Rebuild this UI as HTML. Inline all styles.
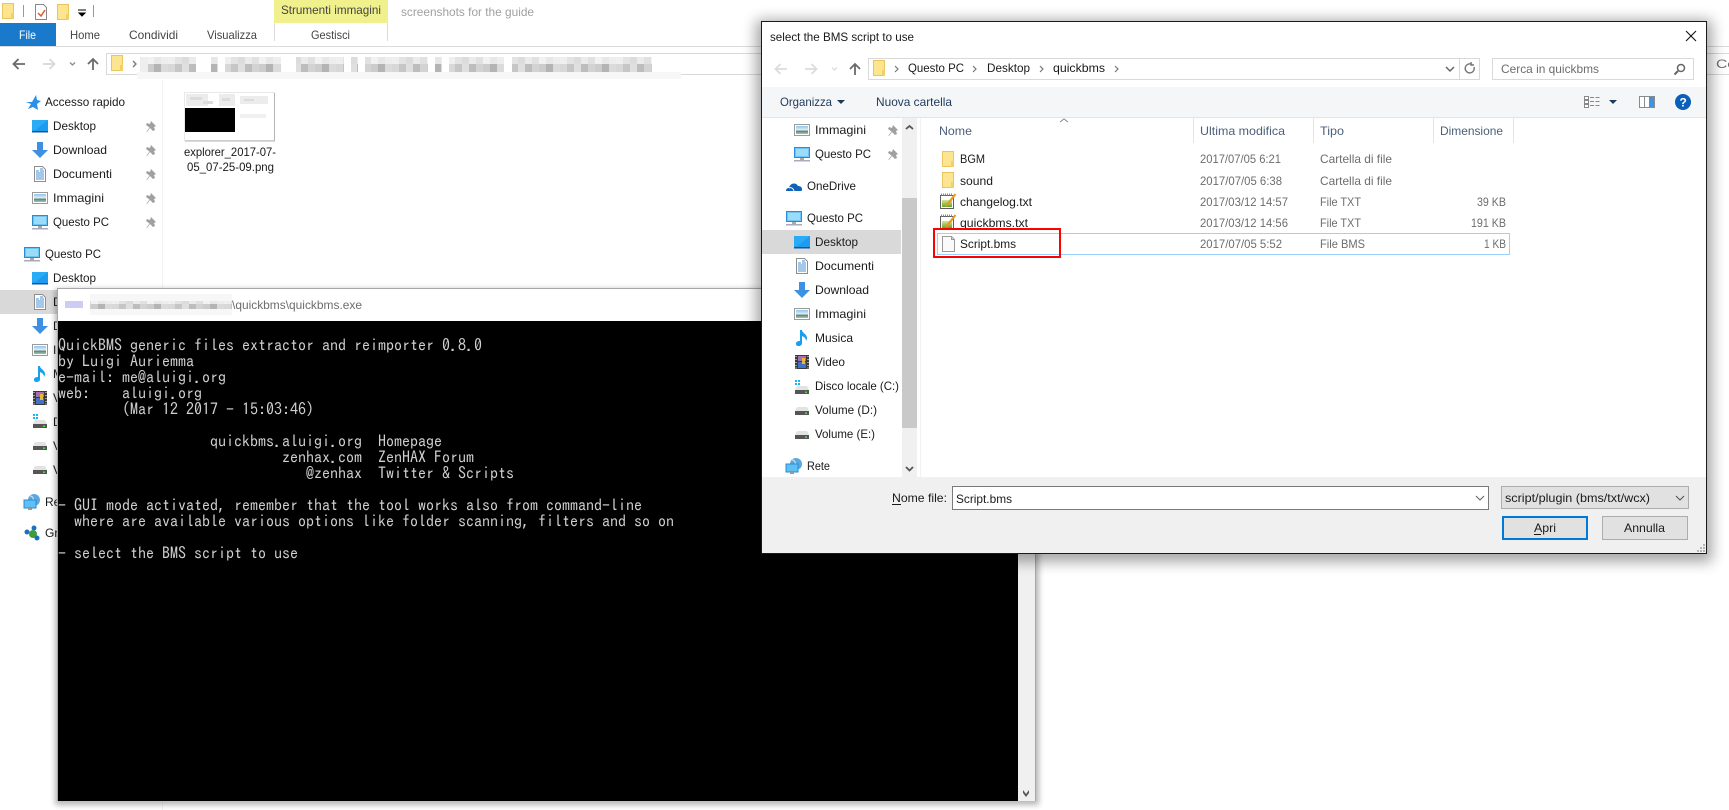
<!DOCTYPE html>
<html><head><meta charset="utf-8"><title>QuickBMS</title>
<style>
html,body{margin:0;padding:0;background:#fff;width:1729px;height:810px;overflow:hidden}
svg{display:block}
text{font-family:"Liberation Sans",sans-serif;font-size:12px;fill:#1a1a1a;white-space:pre}
.g{fill:#6d6d6d}
.h{fill:#4c607a}
.t{fill:#1e395b}
.r{fill:#444}
.c{font-family:"IPAGothic","Liberation Mono",monospace;font-size:16px;fill:#cfcfcf}
</style></head><body>
<svg xmlns="http://www.w3.org/2000/svg" width="1729" height="810" viewBox="0 0 1729 810">
<defs>
<filter id="sh" x="-10%" y="-10%" width="120%" height="120%"><feGaussianBlur stdDeviation="7"/></filter>
<filter id="sh2" x="-10%" y="-10%" width="120%" height="120%"><feGaussianBlur stdDeviation="3"/></filter>
<linearGradient id="sky" x1="0" y1="0" x2="0" y2="1"><stop offset="0" stop-color="#8fc4ec"/><stop offset=".55" stop-color="#e8f3fa"/><stop offset=".6" stop-color="#4f7d6a"/><stop offset="1" stop-color="#a9c7b8"/></linearGradient>
<linearGradient id="grn" x1="0" y1="0" x2="0" y2="1"><stop offset="0" stop-color="#d5e88a"/><stop offset="1" stop-color="#5fa82c"/></linearGradient>
<pattern id="bl" width="56" height="16" patternUnits="userSpaceOnUse">
<rect width="56" height="16" fill="#e6e6e6"/>
<rect x="0" width="7" height="8" fill="#d8d8d8"/><rect x="7" width="7" height="8" fill="#c6c6c6"/><rect x="14" width="7" height="8" fill="#dfdfdf"/><rect x="21" width="7" height="8" fill="#bdbdbd"/><rect x="28" width="7" height="8" fill="#d3d3d3"/><rect x="35" width="7" height="8" fill="#cccccc"/><rect x="42" width="7" height="8" fill="#b4b4b4"/><rect x="49" width="7" height="8" fill="#dbdbdb"/>
<rect x="0" y="8" width="7" height="8" fill="#efefef"/><rect x="7" y="8" width="7" height="8" fill="#e3e3e3"/><rect x="14" y="8" width="7" height="8" fill="#dcdcdc"/><rect x="21" y="8" width="7" height="8" fill="#ebebeb"/><rect x="28" y="8" width="7" height="8" fill="#e1e1e1"/><rect x="35" y="8" width="7" height="8" fill="#f2f2f2"/><rect x="42" y="8" width="7" height="8" fill="#e7e7e7"/><rect x="49" y="8" width="7" height="8" fill="#ededed"/>
</pattern>
<g id="folder"><path d="M.5.5h11v15H.5z" fill="#fde58f" stroke="#e8c55f"/><path d="M9 10h3v6H9z" fill="#f3cf68"/></g>
<g id="desk"><rect x="0" y="2" width="16" height="12" fill="#1c9bf0"/><path d="M0 2h16L3 12.500H0z" fill="#29abf6"/><rect x="0" y="13" width="16" height="1.500" fill="#14569c"/></g>
<g id="pc"><rect x=".5" y="1.500" width="15" height="10" fill="#6fc3f5" stroke="#2a8dd4"/><rect x="2" y="3" width="12" height="7" fill="#9bdcfa"/><rect x="6" y="12" width="4" height="2" fill="#aaa"/><rect x="0" y="14" width="16" height="1.500" fill="#aab"/></g>
<path id="dl" d="M5 0h6v8h5l-8 8-8-8h5z" fill="#3e90e2"/>
<g id="doc"><path d="M2.500.5h8l3 3v12h-11z" fill="#fff" stroke="#8e8e8e"/><path d="M4 5h3M4 7h8M4 9h8M4 11h8M4 13h8M8 3h3M8 5h4" stroke="#4a8fd6"/></g>
<g id="img"><rect x=".5" y="2.500" width="15" height="11" fill="#fff" stroke="#9a9a9a"/><rect x="2" y="4" width="12" height="8" fill="url(#sky)"/></g>
<path id="mus" d="M6 0h2c0 3 5 4 5 8 0 1-.5 2-1 3 0-3-2-4-4-5v7.500c0 1.500-1.500 2.500-3.500 2.500S2 15 2 13.500 3.500 11 6 11z" fill="#17a0f0"/>
<g id="vid"><rect x="1" y="1" width="14" height="14" fill="#3a3a3a"/><path d="M2 2v1M2 5v1M2 8v1M2 11v1M2 13.500v1M14 2v1M14 5v1M14 8v1M14 11v1M14 13.500v1" stroke="#fff"/><rect x="4" y="2" width="8" height="5" fill="#a86fb0"/><rect x="4" y="8" width="8" height="6" fill="#3f73c8"/><rect x="8" y="4" width="3" height="6" fill="#e8b83a"/></g>
<g id="disk"><path d="M3 3h10l2 4H1z" fill="#e3e3e3"/><rect x="1" y="7" width="14" height="4" fill="#555"/><rect x="11" y="8.500" width="2" height="1.500" fill="#3de03d"/></g>
<g id="diskc"><path d="M1 0h2v2H1zM4 0h2v2H4zM1 3h2v2H1zM4 3h2v2H4z" fill="#14b4f5"/><path d="M3 6h10l2 4H1z" fill="#e3e3e3"/><rect x="1" y="10" width="14" height="4" fill="#555"/><rect x="11" y="11.500" width="2" height="1.500" fill="#3de03d"/></g>
<path id="pin" d="M5 1l5 5-2 1 1 3-2 1-3-3-3 4-.5-.5 3-4L0 5l1-2 3 1z" fill="#a0a0a0"/>
<path id="star" d="M10 0l1 5 4 1-4 3 1 6-5-3-5 2 3-5-5-2h6z" fill="#2a90ea"/>
<g id="cloud"><path d="M0 13c0-2 1-3 3-3 1-5 7-6 9-2 2 0 4 1 4 3 0 1 0 2-1 2z" fill="#0f62b8"/><path d="M3 10c2-1 4 0 5 3" fill="none" stroke="#fff"/></g>
<g id="net"><circle cx="10" cy="6" r="6" fill="#5ba8e0"/><path d="M6 2c3 0 4 3 3 6" stroke="#cfe6f7" fill="none"/><rect x="0" y="6" width="12" height="8" fill="#5ec0f5" stroke="#2a8dd4"/><rect x="4" y="14" width="4" height="2" fill="#999"/></g>
<g id="home"><circle cx="3" cy="7" r="2.500" fill="#1d6fc4"/><circle cx="10" cy="3" r="2.500" fill="#1d6fc4"/><circle cx="9" cy="9" r="4" fill="#3f9b3c"/><circle cx="13" cy="13" r="2.500" fill="#1d6fc4"/></g>
<g id="txt"><rect x=".5" y="2.500" width="13" height="13" fill="#fff" stroke="#5e5e5e"/><path d="M1 1.500h12" stroke="#888" stroke-dasharray="1 1" stroke-width="2"/><rect x="2" y="7" width="10" height="7" fill="url(#grn)"/><path d="M6 13L15.500 1" stroke="#e89a1f" stroke-width="2.200"/></g>
<g id="file"><path d="M.5.500h9l3 3v12H.5z" fill="#fafafa" stroke="#9a9a9a"/><path d="M9.500.500v3h3" fill="none" stroke="#9a9a9a"/></g>
</defs>

<!-- Explorer background -->
<rect width="1729" height="810" fill="#fff"/>
<use href="#folder" x="2" y="3"/>
<path d="M23.500 5v12M93.500 5v12" stroke="#999"/>
<path d="M35.500 4.500h8l3 3v12h-11z" fill="#fff" stroke="#888"/>
<path d="M38 13l3 3 4-6" fill="none" stroke="#e8562a" stroke-width="1.500"/>
<use href="#folder" x="57" y="4"/>
<path d="M78 10h8M79 13h6l-3 3z" fill="#000" stroke="#000" stroke-width="1"/>
<rect x="0" y="23" width="56" height="23" fill="#1979ca"/>
<text x="19" y="39" textLength="17" lengthAdjust="spacingAndGlyphs" style="fill:#fff">File</text>
<text x="70" y="39" textLength="30" lengthAdjust="spacingAndGlyphs" class="r">Home</text>
<text x="129" y="39" textLength="49" lengthAdjust="spacingAndGlyphs" class="r">Condividi</text>
<text x="207" y="39" textLength="50" lengthAdjust="spacingAndGlyphs" class="r">Visualizza</text>
<rect x="274" y="0" width="114" height="23" fill="#f0f08c"/>
<text x="281" y="14" textLength="100" lengthAdjust="spacingAndGlyphs" class="r">Strumenti immagini</text>
<path d="M274.500 23v18M387.500 23v18" stroke="#dadbdc"/>
<text x="311" y="39" textLength="39" lengthAdjust="spacingAndGlyphs" class="r">Gestisci</text>
<text x="401" y="16" textLength="133" lengthAdjust="spacingAndGlyphs" style="fill:#a0a0a0">screenshots for the guide</text>
<path d="M0 46.500H1729" stroke="#dadbdc"/>
<!-- nav buttons -->
<path d="M25 64H14M18.500 59l-5 5 5 5" fill="none" stroke="#6a6a6a" stroke-width="1.800"/>
<path d="M43 64h11M49.500 59l5 5-5 5" fill="none" stroke="#d8d8d8" stroke-width="1.800"/>
<path d="M70 62.500l2.500 2.500 2.500-2.500" fill="none" stroke="#8a8a8a" stroke-width="1.300"/>
<path d="M93 70V59M88 64l5-5 5 5" fill="none" stroke="#6a6a6a" stroke-width="1.800"/>
<rect x="106.500" y="53.500" width="1640" height="21" fill="#fff" stroke="#d9d9d9"/>
<use href="#folder" x="111" y="55"/>
<path d="M133 61l3 3-3 3" fill="none" stroke="#777" stroke-width="1.300"/>
<rect x="137" y="72" width="544" height="7" fill="#f7f7f7"/>
<g fill="url(#bl)"><rect x="140" y="57" width="8" height="15" fill="#eee"/><rect x="148" y="57" width="48" height="15"/><rect x="211" y="57" width="7" height="15"/><rect x="225" y="57" width="56" height="15"/><rect x="296" y="57" width="48" height="15"/><rect x="351" y="57" width="7" height="15"/><rect x="365" y="57" width="63" height="15"/><rect x="435" y="57" width="7" height="15"/><rect x="449" y="57" width="55" height="15"/><rect x="512" y="57" width="140" height="15"/></g>
<text x="1716" y="68" textLength="20" lengthAdjust="spacingAndGlyphs" class="g">Ce</text>
<path d="M162.500 80V810" stroke="#f2f2f2"/>

<!-- explorer sidebar -->
<use href="#star" x="26" y="95"/>
<text x="45" y="106" textLength="80" lengthAdjust="spacingAndGlyphs">Accesso rapido</text>
<use href="#desk" x="32" y="118"/><text x="53" y="130" textLength="43" lengthAdjust="spacingAndGlyphs">Desktop</text><use href="#pin" x="146" y="120"/>
<use href="#dl" x="32" y="142"/><text x="53" y="154" textLength="54" lengthAdjust="spacingAndGlyphs">Download</text><use href="#pin" x="146" y="144"/>
<use href="#doc" x="32" y="166"/><text x="53" y="178" textLength="59" lengthAdjust="spacingAndGlyphs">Documenti</text><use href="#pin" x="146" y="168"/>
<use href="#img" x="32" y="190"/><text x="53" y="202" textLength="51" lengthAdjust="spacingAndGlyphs">Immagini</text><use href="#pin" x="146" y="192"/>
<use href="#pc" x="32" y="214"/><text x="53" y="226" textLength="56" lengthAdjust="spacingAndGlyphs">Questo PC</text><use href="#pin" x="146" y="216"/>
<use href="#pc" x="24" y="246"/><text x="45" y="258" textLength="56" lengthAdjust="spacingAndGlyphs">Questo PC</text>
<use href="#desk" x="32" y="270"/><text x="53" y="282" textLength="43" lengthAdjust="spacingAndGlyphs">Desktop</text>
<rect x="0" y="290" width="60" height="24" fill="#d9d9d9"/>
<use href="#doc" x="32" y="294"/><text x="53" y="306" textLength="59" lengthAdjust="spacingAndGlyphs">Documenti</text>
<use href="#dl" x="32" y="318"/><text x="53" y="330">Download</text>
<use href="#img" x="32" y="342"/><text x="53" y="354">Immagini</text>
<use href="#mus" x="32" y="366"/><text x="53" y="378">Musica</text>
<use href="#vid" x="32" y="390"/><text x="53" y="402">Video</text>
<use href="#diskc" x="32" y="414"/><text x="53" y="426">Disco locale (C:)</text>
<use href="#disk" x="32" y="439"/><text x="53" y="450">Volume (D:)</text>
<use href="#disk" x="32" y="463"/><text x="53" y="474">Volume (E:)</text>
<use href="#net" x="24" y="494"/><text x="45" y="506">Rete</text>
<use href="#home" x="24" y="525"/><text x="45" y="537">Gruppo home</text>

<!-- thumbnail -->
<rect x="184.500" y="92.500" width="90" height="48" fill="#fff" stroke="#e8e8e8"/>
<path d="M274.500 93v48H185" fill="none" stroke="#b5b5b5"/>
<g fill="#ececec"><rect x="186" y="94" width="22" height="12"/><rect x="219" y="94" width="16" height="12"/><rect x="240" y="96" width="28" height="8"/></g>
<g fill="#dcdcdc"><rect x="190" y="97" width="12" height="3"/><rect x="203" y="101" width="10" height="3"/><rect x="222" y="98" width="8" height="3"/><rect x="244" y="99" width="10" height="2"/></g>
<rect x="185" y="108" width="50" height="24" fill="#000"/>
<rect x="240" y="114" width="26" height="4" fill="#f0f0f0"/>
<text x="184" y="156" textLength="92" lengthAdjust="spacingAndGlyphs">explorer_2017-07-</text>
<text x="187" y="171" textLength="87" lengthAdjust="spacingAndGlyphs">05_07-25-09.png</text>

<!-- console window -->
<rect x="55" y="289" width="984" height="516" fill="#000" opacity=".28" filter="url(#sh2)"/>
<rect x="57.500" y="288.500" width="978" height="512" fill="#fff" stroke="#a8a8a8"/>
<rect x="65" y="301" width="18" height="7" fill="#ccccf5"/>
<rect x="90" y="294" width="142" height="21" fill="#f7f7f7"/>
<rect x="90" y="301" width="142" height="8" fill="url(#bl)"/>
<text x="232" y="309" textLength="130" lengthAdjust="spacingAndGlyphs" class="g">\quickbms\quickbms.exe</text>
<rect x="58" y="321" width="960" height="480" fill="#000"/>
<rect x="1018" y="321" width="17" height="480" fill="#f0f0f0"/>
<path d="M1023 790l3 4 3-4v3l-3 4-3-4z" fill="#555"/>
<g class="c">
<text class="c" x="58" y="351">QuickBMS generic files extractor and reimporter 0.8.0</text>
<text class="c" x="58" y="367">by Luigi Auriemma</text>
<text class="c" x="58" y="383">e-mail: me@aluigi.org</text>
<text class="c" x="58" y="399">web:    aluigi.org</text>
<text class="c" x="122" y="415">(Mar 12 2017 - 15:03:46)</text>
<text class="c" x="210" y="447">quickbms.aluigi.org  Homepage</text>
<text class="c" x="282" y="463">zenhax.com  ZenHAX Forum</text>
<text class="c" x="306" y="479">@zenhax  Twitter &amp; Scripts</text>
<text class="c" x="58" y="511">- GUI mode activated, remember that the tool works also from command-line</text>
<text class="c" x="74" y="527">where are available various options like folder scanning, filters and so on</text>
<text class="c" x="58" y="559">- select the BMS script to use</text>
</g>

<!-- dialog -->
<rect x="756" y="20" width="956" height="542" fill="#000" opacity=".35" filter="url(#sh)"/>
<rect x="761.500" y="21.500" width="945" height="532" fill="#fff" stroke="#1a1a1a"/>
<text x="770" y="41" textLength="144" lengthAdjust="spacingAndGlyphs">select the BMS script to use</text>
<path d="M1686 31l10 10M1696 31l-10 10" stroke="#111" stroke-width="1.100"/>
<path d="M787 69H776M780.500 64l-5 5 5 5" fill="none" stroke="#dcdcdc" stroke-width="1.800"/>
<path d="M805 69h11M811.500 64l5 5-5 5" fill="none" stroke="#dcdcdc" stroke-width="1.800"/>
<path d="M832 67.500l2.500 2.500 2.500-2.500" fill="none" stroke="#dcdcdc" stroke-width="1.300"/>
<path d="M855 75V64M850 69l5-5 5 5" fill="none" stroke="#6a6a6a" stroke-width="1.800"/>
<rect x="868.500" y="58.500" width="611" height="21" fill="#fff" stroke="#d9d9d9"/>
<path d="M1459.500 59v20" stroke="#d9d9d9"/>
<use href="#folder" x="873" y="60"/>
<path d="M895 66l3 3-3 3M973 66l3 3-3 3M1040 66l3 3-3 3M1115 66l3 3-3 3" fill="none" stroke="#777" stroke-width="1.200"/>
<text x="908" y="72" textLength="56" lengthAdjust="spacingAndGlyphs">Questo PC</text>
<text x="987" y="72" textLength="43" lengthAdjust="spacingAndGlyphs">Desktop</text>
<text x="1053" y="72" textLength="52" lengthAdjust="spacingAndGlyphs">quickbms</text>
<path d="M1446 67l4 4 4-4" fill="none" stroke="#666" stroke-width="1.500"/>
<path d="M1474 67a4.500 4.500 0 1 1-2-2.500M1471 62v3h3" fill="none" stroke="#777" stroke-width="1.400"/>
<rect x="1492.500" y="58.500" width="201" height="21" fill="#fff" stroke="#d9d9d9"/>
<text x="1501" y="73" textLength="98" lengthAdjust="spacingAndGlyphs" class="g">Cerca in quickbms</text>
<circle cx="1681" cy="68" r="3.500" fill="none" stroke="#666" stroke-width="1.500"/><path d="M1678 71l-3.500 3.500" stroke="#666" stroke-width="2"/>

<rect x="762" y="87" width="944" height="30" fill="#f5f6f7"/>
<path d="M762 117.500h944" stroke="#e5e5e5"/>
<text x="780" y="106" textLength="52" lengthAdjust="spacingAndGlyphs" class="t">Organizza</text>
<path d="M837 100h8l-4 4z" fill="#1e395b"/>
<text x="876" y="106" textLength="76" lengthAdjust="spacingAndGlyphs" class="t">Nuova cartella</text>
<path d="M1584.500 96.500h4v3h-4zM1584.500 100.500h4v3h-4zM1584.500 104.500h4v3h-4z" fill="#fff" stroke="#888"/>
<path d="M1590 97.500h10M1590 101.500h10M1590 105.500h10" stroke="#888" stroke-dasharray="4 1.500"/>
<path d="M1609 100h8l-4 4z" fill="#1e395b"/>
<rect x="1639.500" y="96.500" width="15" height="11" fill="#fff" stroke="#8a8a8a"/><rect x="1649" y="97" width="5" height="10" fill="#3f93e0"/><path d="M1644.500 97v10" stroke="#8a8a8a"/>
<circle cx="1683" cy="102" r="8" fill="#0a5fb8"/>
<text x="1679.500" y="106.500" style="fill:#fff;font-weight:bold;font-size:12px">?</text>

<!-- dialog nav -->
<rect x="902" y="118" width="15" height="359" fill="#f0f0f0"/>
<rect x="902" y="198" width="15" height="230" fill="#c9c9c9"/>
<path d="M906 129l3.500-3 3.500 3" fill="none" stroke="#555" stroke-width="1.800"/>
<path d="M906 467l3.500 3.500 3.500-3.500" fill="none" stroke="#555" stroke-width="1.800"/>
<path d="M920.500 118V477" stroke="#f2f2f2"/>
<use href="#img" x="794" y="122"/><text x="815" y="134" textLength="51" lengthAdjust="spacingAndGlyphs">Immagini</text><use href="#pin" x="888" y="124"/>
<use href="#pc" x="794" y="146"/><text x="815" y="158" textLength="56" lengthAdjust="spacingAndGlyphs">Questo PC</text><use href="#pin" x="888" y="148"/>
<use href="#cloud" x="786" y="178"/><text x="807" y="190" textLength="49" lengthAdjust="spacingAndGlyphs">OneDrive</text>
<use href="#pc" x="786" y="210"/><text x="807" y="222" textLength="56" lengthAdjust="spacingAndGlyphs">Questo PC</text>
<rect x="762" y="230" width="139" height="24" fill="#d9d9d9"/>
<use href="#desk" x="794" y="234"/><text x="815" y="246" textLength="43" lengthAdjust="spacingAndGlyphs">Desktop</text>
<use href="#doc" x="794" y="258"/><text x="815" y="270" textLength="59" lengthAdjust="spacingAndGlyphs">Documenti</text>
<use href="#dl" x="794" y="282"/><text x="815" y="294" textLength="54" lengthAdjust="spacingAndGlyphs">Download</text>
<use href="#img" x="794" y="306"/><text x="815" y="318" textLength="51" lengthAdjust="spacingAndGlyphs">Immagini</text>
<use href="#mus" x="794" y="330"/><text x="815" y="342" textLength="38" lengthAdjust="spacingAndGlyphs">Musica</text>
<use href="#vid" x="794" y="354"/><text x="815" y="366" textLength="30" lengthAdjust="spacingAndGlyphs">Video</text>
<use href="#diskc" x="794" y="380"/><text x="815" y="390" textLength="84" lengthAdjust="spacingAndGlyphs">Disco locale (C:)</text>
<use href="#disk" x="794" y="404"/><text x="815" y="414" textLength="62" lengthAdjust="spacingAndGlyphs">Volume (D:)</text>
<use href="#disk" x="794" y="428"/><text x="815" y="438" textLength="60" lengthAdjust="spacingAndGlyphs">Volume (E:)</text>
<use href="#net" x="786" y="458"/><text x="807" y="470" textLength="23" lengthAdjust="spacingAndGlyphs">Rete</text>

<!-- list header -->
<path d="M1060 122l4-3 4 3" fill="none" stroke="#888"/>
<text x="939" y="135" textLength="33" lengthAdjust="spacingAndGlyphs" class="h">Nome</text>
<text x="1200" y="135" textLength="85" lengthAdjust="spacingAndGlyphs" class="h">Ultima modifica</text>
<text x="1320" y="135" textLength="24" lengthAdjust="spacingAndGlyphs" class="h">Tipo</text>
<text x="1440" y="135" textLength="63" lengthAdjust="spacingAndGlyphs" class="h">Dimensione</text>
<path d="M1193.500 118v25M1313.500 118v25M1433.500 118v25M1513.500 118v25" stroke="#e5e5e5"/>

<!-- list rows -->
<rect x="937.500" y="233.500" width="572" height="21" fill="#fff" stroke="#99d1ff"/>
<use href="#folder" x="942" y="151"/><text x="960" y="163" textLength="25" lengthAdjust="spacingAndGlyphs">BGM</text>
<use href="#folder" x="942" y="172"/><text x="960" y="185" textLength="33" lengthAdjust="spacingAndGlyphs">sound</text>
<use href="#txt" x="940" y="193"/><text x="960" y="206" textLength="72" lengthAdjust="spacingAndGlyphs">changelog.txt</text>
<use href="#txt" x="940" y="214"/><text x="960" y="227" textLength="68" lengthAdjust="spacingAndGlyphs">quickbms.txt</text>
<use href="#file" x="942" y="236"/><text x="960" y="248" textLength="56" lengthAdjust="spacingAndGlyphs">Script.bms</text>
<g>
<text x="1200" y="163" textLength="81" lengthAdjust="spacingAndGlyphs" class="g">2017/07/05 6:21</text>
<text x="1200" y="185" textLength="82" lengthAdjust="spacingAndGlyphs" class="g">2017/07/05 6:38</text>
<text x="1200" y="206" textLength="88" lengthAdjust="spacingAndGlyphs" class="g">2017/03/12 14:57</text>
<text x="1200" y="227" textLength="88" lengthAdjust="spacingAndGlyphs" class="g">2017/03/12 14:56</text>
<text x="1200" y="248" textLength="82" lengthAdjust="spacingAndGlyphs" class="g">2017/07/05 5:52</text>
<text x="1320" y="163" textLength="72" lengthAdjust="spacingAndGlyphs" class="g">Cartella di file</text>
<text x="1320" y="185" textLength="72" lengthAdjust="spacingAndGlyphs" class="g">Cartella di file</text>
<text x="1320" y="206" textLength="41" lengthAdjust="spacingAndGlyphs" class="g">File TXT</text>
<text x="1320" y="227" textLength="41" lengthAdjust="spacingAndGlyphs" class="g">File TXT</text>
<text x="1320" y="248" textLength="45" lengthAdjust="spacingAndGlyphs" class="g">File BMS</text>
<text x="1477" y="206" textLength="29" lengthAdjust="spacingAndGlyphs" class="g">39 KB</text>
<text x="1471" y="227" textLength="35" lengthAdjust="spacingAndGlyphs" class="g">191 KB</text>
<text x="1484" y="248" textLength="22" lengthAdjust="spacingAndGlyphs" class="g">1 KB</text>
</g>
<rect x="934" y="229" width="126" height="28" fill="none" stroke="#f00" stroke-width="2"/>

<!-- dialog bottom -->
<rect x="762" y="477" width="944" height="76" fill="#f0f0f0"/>
<text x="892" y="502" textLength="55" lengthAdjust="spacingAndGlyphs">Nome file:</text>
<path d="M892 504.500h9" stroke="#1a1a1a"/>
<rect x="952.500" y="486.500" width="536" height="23" fill="#fff" stroke="#7a7a7a"/>
<text x="956" y="503" textLength="56" lengthAdjust="spacingAndGlyphs">Script.bms</text>
<path d="M1476 496l4 4 4-4" fill="none" stroke="#666" stroke-width="1.100"/>
<rect x="1501.500" y="486.500" width="187" height="22" fill="#e1e1e1" stroke="#adadad"/>
<text x="1505" y="502" textLength="145" lengthAdjust="spacingAndGlyphs">script/plugin (bms/txt/wcx)</text>
<path d="M1676 496l4 4 4-4" fill="none" stroke="#555" stroke-width="1.100"/>
<rect x="1503" y="517" width="84" height="22" fill="#e1e1e1" stroke="#0078d7" stroke-width="2"/>
<text x="1534" y="532" textLength="22" lengthAdjust="spacingAndGlyphs">Apri</text>
<path d="M1534 534.500h7" stroke="#1a1a1a"/>
<rect x="1602.500" y="516.500" width="85" height="23" fill="#e1e1e1" stroke="#adadad"/>
<text x="1624" y="532" textLength="41" lengthAdjust="spacingAndGlyphs">Annulla</text>
<path d="M1703 544h2v2h-2zM1700 547h2v2h-2zM1703 547h2v2h-2zM1697 550h2v2h-2zM1700 550h2v2h-2zM1703 550h2v2h-2z" fill="#b5b5b5"/>
</svg>
</body></html>
